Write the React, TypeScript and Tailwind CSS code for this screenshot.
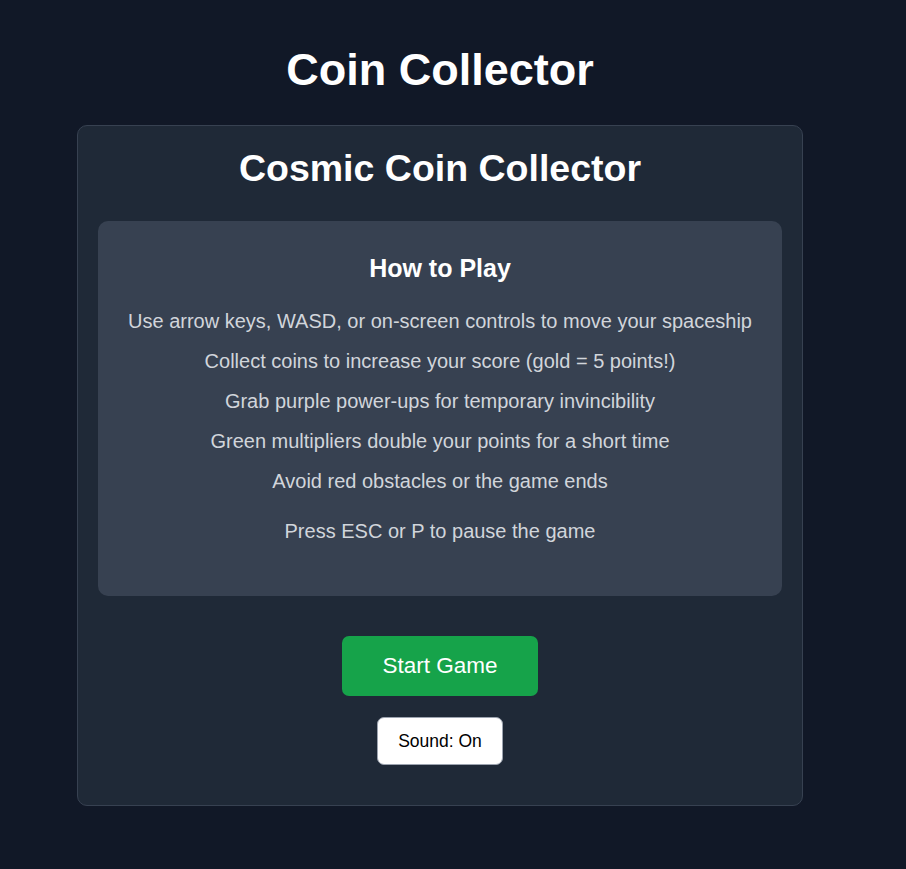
const rules = [
  "Use arrow keys, WASD, or on-screen controls to move your spaceship",
  "Collect coins to increase your score (gold = 5 points!)",
  "Grab purple power-ups for temporary invincibility",
  "Green multipliers double your points for a short time",
  "Avoid red obstacles or the game ends",
];

export default function App() {
  return (
    <div className="min-h-screen bg-[#111827] font-['Liberation_Sans',Arial,sans-serif]">
      <div className="w-[880px] flex flex-col items-center pt-[43px] pb-[63px]">
        <h1 className="text-[45px] leading-[54px] font-bold text-white mb-[28px]">
          Coin Collector
        </h1>

        <div className="w-[726px] bg-[#1f2937] border border-[#374151] rounded-[10px] p-[20px] flex flex-col items-center">
          <h2 className="text-[37.5px] leading-[45px] font-bold text-white mb-[30px]">
            Cosmic Coin Collector
          </h2>

          {/* Instructions */}
          <div className="w-full bg-[#374151] rounded-[10px] px-[30px] pt-[30px] pb-[50px] text-center">
            <h3 className="text-[25px] leading-[35px] font-bold text-white mb-[20px]">
              How to Play
            </h3>
            <ul className="flex flex-col gap-[10px]">
              {rules.map((rule) => (
                <li key={rule} className="text-[20px] leading-[30px] text-[#d1d5db]">
                  {rule}
                </li>
              ))}
            </ul>
            <p className="mt-[20px] text-[20px] leading-[30px] text-[#d1d5db]">
              Press ESC or P to pause the game
            </p>
          </div>

          <button className="mt-[40px] bg-[#16a34a] text-white text-[22.5px] leading-[30px] px-[40px] py-[15px] rounded-[7px]">
            Start Game
          </button>
          <button className="mt-[21px] mb-[20px] bg-white text-black text-[17.5px] leading-[22px] px-[20px] py-[12px] border border-[#9ca3af] rounded-[7px]">
            Sound: On
          </button>
        </div>
      </div>
    </div>
  );
}
